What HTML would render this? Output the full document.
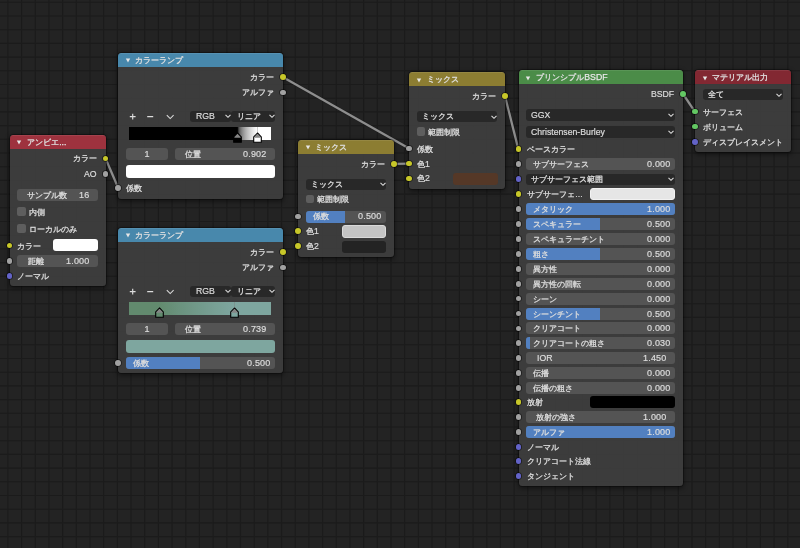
<!DOCTYPE html><html lang="ja"><head><meta charset="utf-8"><style>
*{margin:0;padding:0;box-sizing:border-box}
html,body{width:800px;height:548px;overflow:hidden;background:#232323}
body{position:relative;font-family:"Liberation Sans",sans-serif}
.bg{position:absolute;left:0;top:0}
.n{position:absolute;background:rgba(61,61,61,0.97);border-radius:3.5px;box-shadow:0 0 0 1px rgba(0,0,0,0.3),0 1.5px 4px 1px rgba(0,0,0,0.4);overflow:hidden}
.h{position:absolute;left:0;top:0;right:0;height:13.8px;box-shadow:inset 0 1px rgba(255,255,255,0.08)}
.t{position:absolute;will-change:transform;white-space:nowrap;color:#dcdcdc;font-size:8.7px;line-height:12px;height:12px;-webkit-text-stroke:0.2px #dcdcdc}
.j{font-size:8.3px;letter-spacing:0.05px;-webkit-text-stroke:0.3px #dcdcdc}
.tt{color:#e6e6e6;-webkit-text-stroke:0.25px #e6e6e6}
.s{position:absolute;width:5.8px;height:5.8px;border-radius:50%;box-shadow:0 0 0 0.8px rgba(0,0,0,0.55)}
.f{position:absolute;background:#545454;border-radius:3px}
.d{position:absolute;background:#282828;border-radius:3px}
.fill{position:absolute;background:#5280c0}
.sw{position:absolute;border-radius:3px}
.cb{position:absolute;width:8.4px;height:8.4px;background:#5e5e5e;border-radius:2px}
.ic,.ramp{position:absolute}
</style></head><body><svg class="bg" width="800" height="548" viewBox="0 0 800 548">
<rect width="800" height="548" fill="#232323"/>
<path d="M-5.78 0V548 M7.90 0V548 M21.58 0V548 M35.26 0V548 M48.95 0V548 M62.63 0V548 M76.31 0V548 M89.99 0V548 M103.67 0V548 M117.36 0V548 M131.04 0V548 M144.72 0V548 M158.40 0V548 M172.08 0V548 M185.77 0V548 M199.45 0V548 M213.13 0V548 M226.81 0V548 M240.49 0V548 M254.18 0V548 M267.86 0V548 M281.54 0V548 M295.22 0V548 M308.90 0V548 M322.59 0V548 M336.27 0V548 M349.95 0V548 M363.63 0V548 M377.31 0V548 M391.00 0V548 M404.68 0V548 M418.36 0V548 M432.04 0V548 M445.72 0V548 M459.41 0V548 M473.09 0V548 M486.77 0V548 M500.45 0V548 M514.13 0V548 M527.82 0V548 M541.50 0V548 M555.18 0V548 M568.86 0V548 M582.54 0V548 M596.23 0V548 M609.91 0V548 M623.59 0V548 M637.27 0V548 M650.95 0V548 M664.64 0V548 M678.32 0V548 M692.00 0V548 M705.68 0V548 M719.36 0V548 M733.05 0V548 M746.73 0V548 M760.41 0V548 M774.09 0V548 M787.77 0V548 M0 2.30H800 M0 16.00H800 M0 29.70H800 M0 43.40H800 M0 57.10H800 M0 70.80H800 M0 84.50H800 M0 98.20H800 M0 111.90H800 M0 125.60H800 M0 139.30H800 M0 153.00H800 M0 166.70H800 M0 180.40H800 M0 194.10H800 M0 207.80H800 M0 221.50H800 M0 235.20H800 M0 248.90H800 M0 262.60H800 M0 276.30H800 M0 290.00H800 M0 303.70H800 M0 317.40H800 M0 331.10H800 M0 344.80H800 M0 358.50H800 M0 372.20H800 M0 385.90H800 M0 399.60H800 M0 413.30H800 M0 427.00H800 M0 440.70H800 M0 454.40H800 M0 468.10H800 M0 481.80H800 M0 495.50H800 M0 509.20H800 M0 522.90H800 M0 536.60H800" stroke="#1b1b1b" stroke-width="1.1" fill="none"/>
<line x1="105.5" y1="158.5" x2="118.4" y2="188.2" stroke="#111" stroke-width="3.4" stroke-opacity="0.2"/>
<line x1="283" y1="77.3" x2="409.2" y2="148.6" stroke="#111" stroke-width="3.4" stroke-opacity="0.2"/>
<line x1="393.8" y1="163.9" x2="409.2" y2="163.6" stroke="#111" stroke-width="3.4" stroke-opacity="0.2"/>
<line x1="505" y1="96.3" x2="518.3" y2="148.9" stroke="#111" stroke-width="3.4" stroke-opacity="0.2"/>
<line x1="683" y1="94" x2="694.9" y2="111.6" stroke="#111" stroke-width="3.4" stroke-opacity="0.2"/>
<line x1="105.5" y1="158.5" x2="118.4" y2="188.2" stroke="#8e8e8e" stroke-width="2.3"/>
<line x1="283" y1="77.3" x2="409.2" y2="148.6" stroke="#8e8e8e" stroke-width="2.3"/>
<line x1="393.8" y1="163.9" x2="409.2" y2="163.6" stroke="#8e8e8e" stroke-width="2.3"/>
<line x1="505" y1="96.3" x2="518.3" y2="148.9" stroke="#8e8e8e" stroke-width="2.3"/>
<line x1="683" y1="94" x2="694.9" y2="111.6" stroke="#8e8e8e" stroke-width="2.3"/>
</svg>
<div class="n" style="left:9.5px;top:135px;width:96px;height:151px"><div class="h" style="background:#9e323e"></div></div>
<svg class="ic" style="left:16.1px;top:140.4px" width="6" height="5" viewBox="0 0 6 5"><path d="M0.8 0.6H5.2L3 4.4Z" fill="#e6e6e6"/></svg>
<div class="t tt" style="top:135.9px;left:26.8px;"><span class="j">アンビエ</span>...</div>
<div class="t " style="top:152.4px;right:703px;"><span class="j">カラー</span></div>
<div class="s" style="left:102.6px;top:155.6px;background:#c7c729"></div>
<div class="t " style="top:167.8px;right:703px;">AO</div>
<div class="s" style="left:102.6px;top:170.9px;background:#a1a1a1"></div>
<div class="f" style="left:17.25px;top:188.5px;width:80.55px;height:12px"></div>
<div class="t " style="top:188.5px;left:27.2px;"><span class="j">サンプル数</span></div>
<div class="t " style="top:188.5px;right:710.7px;font-size:9px;letter-spacing:0.2px;">16</div>
<div class="cb" style="left:17.2px;top:207.4px"></div>
<div class="t " style="top:205.5px;left:29.2px;"><span class="j">内側</span></div>
<div class="cb" style="left:17.2px;top:224.3px"></div>
<div class="t " style="top:222.5px;left:29.2px;"><span class="j">ローカルのみ</span></div>
<div class="s" style="left:6.6px;top:242.7px;background:#c7c729"></div>
<div class="t " style="top:239.6px;left:17.2px;"><span class="j">カラー</span></div>
<div class="sw" style="left:53.4px;top:239.4px;width:44.6px;height:12px;background:#ffffff"></div>
<div class="s" style="left:6.6px;top:258.1px;background:#a1a1a1"></div>
<div class="f" style="left:17.2px;top:255px;width:80.8px;height:11.8px"></div>
<div class="t " style="top:255px;left:27.7px;"><span class="j">距離</span></div>
<div class="t " style="top:255px;right:710.5px;font-size:9px;letter-spacing:0.2px;">1.000</div>
<div class="s" style="left:6.6px;top:273.1px;background:#6363c7"></div>
<div class="t " style="top:270px;left:17.2px;"><span class="j">ノーマル</span></div>
<div class="n" style="left:118px;top:53px;width:165px;height:145.8px"><div class="h" style="background:#4888ac"></div></div>
<svg class="ic" style="left:124.6px;top:58.4px" width="6" height="5" viewBox="0 0 6 5"><path d="M0.8 0.6H5.2L3 4.4Z" fill="#e6e6e6"/></svg>
<div class="t tt" style="top:53.9px;left:135.3px;"><span class="j">カラーランプ</span></div>
<div class="t " style="top:71.3px;right:526px;"><span class="j">カラー</span></div>
<div class="s" style="left:280.1px;top:74.4px;background:#c7c729"></div>
<div class="t " style="top:86.4px;right:526px;"><span class="j">アルファ</span></div>
<div class="s" style="left:280.1px;top:89.5px;background:#a1a1a1"></div>
<svg class="ic" style="left:129px;top:112.5px" width="48" height="7" viewBox="0 0 48 7"><path d="M0.8 3.6H6.6M3.7 0.8V6.4M18.2 3.6H24.2" stroke="#dcdcdc" stroke-width="1.15" fill="none"/><path d="M37.8 2.2L41.2 5.6L44.6 2.2" stroke="#dcdcdc" stroke-width="1.05" fill="none"/></svg>
<div class="d" style="left:189.8px;top:110.6px;width:41px;height:11.3px"></div>
<div class="t " style="top:110.2px;left:195.5px;">RGB</div>
<svg class="ic" style="left:224.5px;top:114.3px" width="6" height="5" viewBox="0 0 6 5"><path d="M0.5 0.8 L3 3.3 L5.5 0.8" fill="none" stroke="#dcdcdc" stroke-width="1.1"/></svg>
<div class="d" style="left:231.4px;top:110.6px;width:43.4px;height:11.3px"></div>
<div class="t " style="top:110.2px;left:236.7px;"><span class="j">リニア</span></div>
<svg class="ic" style="left:268.5px;top:114.3px" width="6" height="5" viewBox="0 0 6 5"><path d="M0.5 0.8 L3 3.3 L5.5 0.8" fill="none" stroke="#dcdcdc" stroke-width="1.1"/></svg>
<div class="ramp" style="left:128.8px;top:126.8px;width:142.4px;height:13.2px;background:linear-gradient(90deg,#000 0%,#000 76.3%,rgb(82,82,82) 77.46%,rgb(113,113,113) 78.62%,rgb(137,137,137) 79.77%,rgb(156,156,156) 80.93%,rgb(173,173,173) 82.09%,rgb(188,188,188) 83.25%,rgb(201,201,201) 84.41%,rgb(213,213,213) 85.57%,rgb(225,225,225) 86.73%,rgb(235,235,235) 87.88%,rgb(245,245,245) 89.04%,rgb(255,255,255) 90.20%,#fff 100%)"></div>
<svg class="ic" style="left:233.3px;top:127px" width="9" height="16" viewBox="0 0 9 16"><path d="M4.5 6 L8.3 10 V15.3 H0.7 V10 Z" fill="#000" stroke="#000" stroke-width="1.1"/><path d="M4.5 6.7 L7.6 10 V10.8 H1.4 V10 Z" fill="#858585"/></svg>
<svg class="ic" style="left:252.9px;top:127px" width="9" height="16" viewBox="0 0 9 16"><path d="M4.5 6 L8.3 10 V15.3 H0.7 V10 Z" fill="#fff" stroke="#000" stroke-width="1.1"/><path d="M4.5 6.7 L7.6 10 V10.8 H1.4 V10 Z" fill="#858585"/><path d="M4.5 0.5V5.5" stroke="#777" stroke-width="0.7" stroke-dasharray="1 1"/></svg>
<div class="f" style="left:126px;top:148.4px;width:41.7px;height:11.7px"></div>
<div class="t " style="top:148.3px;left:46.85px;width:200px;text-align:center;font-size:9px;letter-spacing:0.2px;">1</div>
<div class="f" style="left:175.1px;top:148.4px;width:99.7px;height:11.7px"></div>
<div class="t " style="top:148.3px;left:184.7px;"><span class="j">位置</span></div>
<div class="t " style="top:148.3px;right:533.1px;font-size:9px;letter-spacing:0.2px;">0.902</div>
<div class="sw" style="left:126px;top:165.4px;width:148.8px;height:12.4px;background:#ffffff"></div>
<div class="s" style="left:115.1px;top:185.3px;background:#a1a1a1"></div>
<div class="t " style="top:182.2px;left:126.4px;"><span class="j">係数</span></div>
<div class="n" style="left:118px;top:228px;width:165px;height:145px"><div class="h" style="background:#4888ac"></div></div>
<svg class="ic" style="left:124.6px;top:233.4px" width="6" height="5" viewBox="0 0 6 5"><path d="M0.8 0.6H5.2L3 4.4Z" fill="#e6e6e6"/></svg>
<div class="t tt" style="top:228.9px;left:135.3px;"><span class="j">カラーランプ</span></div>
<div class="t " style="top:246.3px;right:526px;"><span class="j">カラー</span></div>
<div class="s" style="left:280.1px;top:249.4px;background:#c7c729"></div>
<div class="t " style="top:261.4px;right:526px;"><span class="j">アルファ</span></div>
<div class="s" style="left:280.1px;top:264.5px;background:#a1a1a1"></div>
<svg class="ic" style="left:129px;top:287.5px" width="48" height="7" viewBox="0 0 48 7"><path d="M0.8 3.6H6.6M3.7 0.8V6.4M18.2 3.6H24.2" stroke="#dcdcdc" stroke-width="1.15" fill="none"/><path d="M37.8 2.2L41.2 5.6L44.6 2.2" stroke="#dcdcdc" stroke-width="1.05" fill="none"/></svg>
<div class="d" style="left:189.8px;top:285.6px;width:41px;height:11.3px"></div>
<div class="t " style="top:285.2px;left:195.5px;">RGB</div>
<svg class="ic" style="left:224.5px;top:289.3px" width="6" height="5" viewBox="0 0 6 5"><path d="M0.5 0.8 L3 3.3 L5.5 0.8" fill="none" stroke="#dcdcdc" stroke-width="1.1"/></svg>
<div class="d" style="left:231.4px;top:285.6px;width:43.4px;height:11.3px"></div>
<div class="t " style="top:285.2px;left:236.7px;"><span class="j">リニア</span></div>
<svg class="ic" style="left:268.5px;top:289.3px" width="6" height="5" viewBox="0 0 6 5"><path d="M0.5 0.8 L3 3.3 L5.5 0.8" fill="none" stroke="#dcdcdc" stroke-width="1.1"/></svg>
<div class="ramp" style="left:128.8px;top:301.8px;width:142.4px;height:13.2px;background:linear-gradient(90deg,rgb(98,138,110) 0%,rgb(98,138,110) 21.5%,rgb(101,141,115) 25.87%,rgb(103,143,120) 30.23%,rgb(106,146,125) 34.60%,rgb(108,148,129) 38.97%,rgb(111,150,133) 43.33%,rgb(113,153,137) 47.70%,rgb(115,155,141) 52.07%,rgb(118,157,145) 56.43%,rgb(120,160,149) 60.80%,rgb(122,162,152) 65.17%,rgb(124,164,156) 69.53%,rgb(126,166,159) 73.90%,rgb(126,166,159) 100%)"></div>
<svg class="ic" style="left:155.2px;top:302px" width="9" height="16" viewBox="0 0 9 16"><path d="M4.5 6 L8.3 10 V15.3 H0.7 V10 Z" fill="#628a6e" stroke="#000" stroke-width="1.1"/><path d="M4.5 6.7 L7.6 10 V10.8 H1.4 V10 Z" fill="#858585"/></svg>
<svg class="ic" style="left:229.7px;top:302px" width="9" height="16" viewBox="0 0 9 16"><path d="M4.5 6 L8.3 10 V15.3 H0.7 V10 Z" fill="#7ea69f" stroke="#000" stroke-width="1.1"/><path d="M4.5 6.7 L7.6 10 V10.8 H1.4 V10 Z" fill="#858585"/><path d="M4.5 0.5V5.5" stroke="#777" stroke-width="0.7" stroke-dasharray="1 1"/></svg>
<div class="f" style="left:126px;top:323.4px;width:41.7px;height:11.7px"></div>
<div class="t " style="top:323.3px;left:46.85px;width:200px;text-align:center;font-size:9px;letter-spacing:0.2px;">1</div>
<div class="f" style="left:175.1px;top:323.4px;width:99.7px;height:11.7px"></div>
<div class="t " style="top:323.3px;left:184.7px;"><span class="j">位置</span></div>
<div class="t " style="top:323.3px;right:533.1px;font-size:9px;letter-spacing:0.2px;">0.739</div>
<div class="sw" style="left:126px;top:340.4px;width:148.8px;height:12.4px;background:#7ea69f"></div>
<div class="s" style="left:115.1px;top:360.3px;background:#a1a1a1"></div>
<div class="f" style="left:126px;top:357.3px;width:148.8px;height:11.7px"></div>
<div class="fill" style="left:126px;top:357.3px;width:73.66px;height:11.7px;border-radius:3px 0 0 3px"></div>
<div class="t " style="top:357.2px;left:133.1px;"><span class="j">係数</span></div>
<div class="t " style="top:357.2px;right:529.1px;font-size:9px;letter-spacing:0.2px;">0.500</div>
<div class="n" style="left:298px;top:140px;width:95.8px;height:116.7px"><div class="h" style="background:#8c7d32"></div></div>
<svg class="ic" style="left:304.6px;top:145.4px" width="6" height="5" viewBox="0 0 6 5"><path d="M0.8 0.6H5.2L3 4.4Z" fill="#e6e6e6"/></svg>
<div class="t tt" style="top:140.9px;left:315.3px;"><span class="j">ミックス</span></div>
<div class="t " style="top:157.7px;right:414.8px;"><span class="j">カラー</span></div>
<div class="s" style="left:390.9px;top:160.8px;background:#c7c729"></div>
<div class="d" style="left:305.8px;top:178.6px;width:80.2px;height:11.3px"></div>
<div class="t " style="top:178.2px;left:310.9px;"><span class="j">ミックス</span></div>
<svg class="ic" style="left:379.5px;top:182.3px" width="6" height="5" viewBox="0 0 6 5"><path d="M0.5 0.8 L3 3.3 L5.5 0.8" fill="none" stroke="#dcdcdc" stroke-width="1.1"/></svg>
<div class="cb" style="left:305.8px;top:195.1px"></div>
<div class="t " style="top:193.4px;left:316.7px;"><span class="j">範囲制限</span></div>
<div class="s" style="left:295.1px;top:213.5px;background:#a1a1a1"></div>
<div class="s" style="left:295.1px;top:228.4px;background:#c7c729"></div>
<div class="s" style="left:295.1px;top:243.3px;background:#c7c729"></div>
<div class="f" style="left:305.8px;top:210.7px;width:80.2px;height:11.9px"></div>
<div class="fill" style="left:305.8px;top:210.7px;width:39.3px;height:11.9px;border-radius:3px 0 0 3px"></div>
<div class="t " style="top:210.4px;left:312.5px;"><span class="j">係数</span></div>
<div class="t " style="top:210.4px;right:418.2px;font-size:9px;letter-spacing:0.2px;">0.500</div>
<div class="t " style="top:225.3px;left:305.5px;"><span class="j">色</span>1</div>
<div class="sw" style="left:341.8px;top:225.2px;width:44.4px;height:12.4px;background:#c4c4c4;border:1px solid #dadada"></div>
<div class="t " style="top:240.2px;left:305.5px;"><span class="j">色</span>2</div>
<div class="sw" style="left:341.8px;top:240.5px;width:44.4px;height:12px;background:#232323"></div>
<div class="n" style="left:409.2px;top:72.2px;width:95.8px;height:116.7px"><div class="h" style="background:#8c7d32"></div></div>
<svg class="ic" style="left:415.8px;top:77.6px" width="6" height="5" viewBox="0 0 6 5"><path d="M0.8 0.6H5.2L3 4.4Z" fill="#e6e6e6"/></svg>
<div class="t tt" style="top:73.1px;left:426.5px;"><span class="j">ミックス</span></div>
<div class="t " style="top:89.9px;right:303.6px;"><span class="j">カラー</span></div>
<div class="s" style="left:502.1px;top:93px;background:#c7c729"></div>
<div class="d" style="left:417px;top:110.8px;width:80.2px;height:11.3px"></div>
<div class="t " style="top:110.4px;left:422.1px;"><span class="j">ミックス</span></div>
<svg class="ic" style="left:490.7px;top:114.5px" width="6" height="5" viewBox="0 0 6 5"><path d="M0.5 0.8 L3 3.3 L5.5 0.8" fill="none" stroke="#dcdcdc" stroke-width="1.1"/></svg>
<div class="cb" style="left:417px;top:127.3px"></div>
<div class="t " style="top:125.6px;left:427.9px;"><span class="j">範囲制限</span></div>
<div class="s" style="left:406.3px;top:145.7px;background:#a1a1a1"></div>
<div class="s" style="left:406.3px;top:160.6px;background:#c7c729"></div>
<div class="s" style="left:406.3px;top:175.5px;background:#c7c729"></div>
<div class="t " style="top:142.6px;left:416.7px;"><span class="j">係数</span></div>
<div class="t " style="top:157.5px;left:416.7px;"><span class="j">色</span>1</div>
<div class="t " style="top:172.4px;left:416.7px;"><span class="j">色</span>2</div>
<div class="sw" style="left:452.6px;top:173px;width:45.3px;height:12.3px;background:#553827"></div>
<div class="n" style="left:518.6px;top:70.4px;width:164.2px;height:415.6px"><div class="h" style="background:#4b8c48"></div></div>
<svg class="ic" style="left:525.2px;top:75.8px" width="6" height="5" viewBox="0 0 6 5"><path d="M0.8 0.6H5.2L3 4.4Z" fill="#e6e6e6"/></svg>
<div class="t tt" style="top:71.3px;left:535.9px;"><span class="j">プリンシプル</span>BSDF</div>
<div class="t " style="top:88px;right:126px;">BSDF</div>
<div class="s" style="left:679.9px;top:91.1px;background:#63c763"></div>
<div class="d" style="left:526px;top:109.3px;width:148.8px;height:11.5px"></div>
<div class="t " style="top:109px;left:530.8px;">GGX</div>
<svg class="ic" style="left:668.2px;top:113.3px" width="6" height="5" viewBox="0 0 6 5"><path d="M0.5 0.8 L3 3.3 L5.5 0.8" fill="none" stroke="#dcdcdc" stroke-width="1.1"/></svg>
<div class="d" style="left:526px;top:126.4px;width:148.8px;height:11.5px"></div>
<div class="t " style="top:126.2px;left:530.8px;">Christensen-Burley</div>
<svg class="ic" style="left:668.2px;top:130.4px" width="6" height="5" viewBox="0 0 6 5"><path d="M0.5 0.8 L3 3.3 L5.5 0.8" fill="none" stroke="#dcdcdc" stroke-width="1.1"/></svg>
<div class="s" style="left:515.7px;top:146px;background:#c7c729"></div>
<div class="t " style="top:142.9px;left:526.7px;"><span class="j">ベースカラー</span></div>
<div class="s" style="left:515.7px;top:161.1px;background:#a1a1a1"></div>
<div class="f" style="left:526px;top:157.8px;width:148.8px;height:12px"></div>
<div class="t " style="top:158px;left:533.2px;"><span class="j">サブサーフェス</span></div>
<div class="t " style="top:158px;right:129.2px;font-size:9px;letter-spacing:0.2px;">0.000</div>
<div class="s" style="left:515.7px;top:176.1px;background:#6363c7"></div>
<div class="d" style="left:526px;top:173.6px;width:148.8px;height:11.5px"></div>
<div class="t " style="top:173.2px;left:531.1px;"><span class="j">サブサーフェス範囲</span></div>
<svg class="ic" style="left:668.2px;top:177.4px" width="6" height="5" viewBox="0 0 6 5"><path d="M0.5 0.8 L3 3.3 L5.5 0.8" fill="none" stroke="#dcdcdc" stroke-width="1.1"/></svg>
<div class="s" style="left:515.7px;top:190.9px;background:#c7c729"></div>
<div class="t " style="top:187.8px;left:526.7px;"><span class="j">サブサーフェ</span>...</div>
<div class="sw" style="left:589.6px;top:188.3px;width:85.4px;height:12.2px;background:#e6e6e6;border:1px solid #f2f2f2"></div>
<div class="s" style="left:515.7px;top:206.3px;background:#a1a1a1"></div>
<div class="f" style="left:526px;top:203.2px;width:148.8px;height:12px"></div>
<div class="fill" style="left:526px;top:203.2px;width:148.8px;height:12px;border-radius:3px"></div>
<div class="t " style="top:203.2px;left:533.2px;"><span class="j">メタリック</span></div>
<div class="t " style="top:203.2px;right:129.2px;font-size:9px;letter-spacing:0.2px;">1.000</div>
<div class="s" style="left:515.7px;top:221.2px;background:#a1a1a1"></div>
<div class="f" style="left:526px;top:218.1px;width:148.8px;height:12px"></div>
<div class="fill" style="left:526px;top:218.1px;width:74.4px;height:12px;border-radius:3px 0 0 3px"></div>
<div class="t " style="top:218.1px;left:533.2px;"><span class="j">スペキュラー</span></div>
<div class="t " style="top:218.1px;right:129.2px;font-size:9px;letter-spacing:0.2px;">0.500</div>
<div class="s" style="left:515.7px;top:236.1px;background:#a1a1a1"></div>
<div class="f" style="left:526px;top:233px;width:148.8px;height:12px"></div>
<div class="t " style="top:233px;left:533.2px;"><span class="j">スペキュラーチント</span></div>
<div class="t " style="top:233px;right:129.2px;font-size:9px;letter-spacing:0.2px;">0.000</div>
<div class="s" style="left:515.7px;top:251px;background:#a1a1a1"></div>
<div class="f" style="left:526px;top:247.9px;width:148.8px;height:12px"></div>
<div class="fill" style="left:526px;top:247.9px;width:74.4px;height:12px;border-radius:3px 0 0 3px"></div>
<div class="t " style="top:247.9px;left:533.2px;"><span class="j">粗さ</span></div>
<div class="t " style="top:247.9px;right:129.2px;font-size:9px;letter-spacing:0.2px;">0.500</div>
<div class="s" style="left:515.7px;top:265.9px;background:#a1a1a1"></div>
<div class="f" style="left:526px;top:262.8px;width:148.8px;height:12px"></div>
<div class="t " style="top:262.8px;left:533.2px;"><span class="j">異方性</span></div>
<div class="t " style="top:262.8px;right:129.2px;font-size:9px;letter-spacing:0.2px;">0.000</div>
<div class="s" style="left:515.7px;top:280.8px;background:#a1a1a1"></div>
<div class="f" style="left:526px;top:277.7px;width:148.8px;height:12px"></div>
<div class="t " style="top:277.7px;left:533.2px;"><span class="j">異方性の回転</span></div>
<div class="t " style="top:277.7px;right:129.2px;font-size:9px;letter-spacing:0.2px;">0.000</div>
<div class="s" style="left:515.7px;top:295.7px;background:#a1a1a1"></div>
<div class="f" style="left:526px;top:292.6px;width:148.8px;height:12px"></div>
<div class="t " style="top:292.6px;left:533.2px;"><span class="j">シーン</span></div>
<div class="t " style="top:292.6px;right:129.2px;font-size:9px;letter-spacing:0.2px;">0.000</div>
<div class="s" style="left:515.7px;top:310.6px;background:#a1a1a1"></div>
<div class="f" style="left:526px;top:307.5px;width:148.8px;height:12px"></div>
<div class="fill" style="left:526px;top:307.5px;width:74.4px;height:12px;border-radius:3px 0 0 3px"></div>
<div class="t " style="top:307.5px;left:533.2px;"><span class="j">シーンチント</span></div>
<div class="t " style="top:307.5px;right:129.2px;font-size:9px;letter-spacing:0.2px;">0.500</div>
<div class="s" style="left:515.7px;top:325.5px;background:#a1a1a1"></div>
<div class="f" style="left:526px;top:322.4px;width:148.8px;height:12px"></div>
<div class="t " style="top:322.4px;left:533.2px;"><span class="j">クリアコート</span></div>
<div class="t " style="top:322.4px;right:129.2px;font-size:9px;letter-spacing:0.2px;">0.000</div>
<div class="s" style="left:515.7px;top:340.4px;background:#a1a1a1"></div>
<div class="f" style="left:526px;top:337.3px;width:148.8px;height:12px"></div>
<div class="fill" style="left:526px;top:337.3px;width:4.46px;height:12px;border-radius:3px 0 0 3px"></div>
<div class="t " style="top:337.3px;left:533.2px;"><span class="j">クリアコートの粗さ</span></div>
<div class="t " style="top:337.3px;right:129.2px;font-size:9px;letter-spacing:0.2px;">0.030</div>
<div class="s" style="left:515.7px;top:355.3px;background:#a1a1a1"></div>
<div class="f" style="left:526px;top:352.2px;width:148.8px;height:12px"></div>
<div class="t " style="top:352.2px;left:537px;">IOR</div>
<div class="t " style="top:352.2px;right:133.2px;font-size:9px;letter-spacing:0.2px;">1.450</div>
<div class="s" style="left:515.7px;top:370.2px;background:#a1a1a1"></div>
<div class="f" style="left:526px;top:367.1px;width:148.8px;height:12px"></div>
<div class="t " style="top:367.1px;left:533.2px;"><span class="j">伝播</span></div>
<div class="t " style="top:367.1px;right:129.2px;font-size:9px;letter-spacing:0.2px;">0.000</div>
<div class="s" style="left:515.7px;top:385.1px;background:#a1a1a1"></div>
<div class="f" style="left:526px;top:382px;width:148.8px;height:12px"></div>
<div class="t " style="top:382px;left:533.2px;"><span class="j">伝播の粗さ</span></div>
<div class="t " style="top:382px;right:129.2px;font-size:9px;letter-spacing:0.2px;">0.000</div>
<div class="s" style="left:515.7px;top:399.4px;background:#c7c729"></div>
<div class="t " style="top:396.3px;left:526.7px;"><span class="j">放射</span></div>
<div class="sw" style="left:589.5px;top:396.2px;width:85.5px;height:12px;background:#000000"></div>
<div class="s" style="left:515.7px;top:414px;background:#a1a1a1"></div>
<div class="f" style="left:526px;top:411px;width:148.8px;height:11.8px"></div>
<div class="t " style="top:410.9px;left:536.2px;"><span class="j">放射の強さ</span></div>
<div class="t " style="top:410.9px;right:133.2px;font-size:9px;letter-spacing:0.2px;">1.000</div>
<div class="s" style="left:515.7px;top:428.9px;background:#a1a1a1"></div>
<div class="f" style="left:526px;top:425.9px;width:148.8px;height:11.8px"></div>
<div class="fill" style="left:526px;top:425.9px;width:148.8px;height:11.8px;border-radius:3px"></div>
<div class="t " style="top:425.8px;left:533.2px;"><span class="j">アルファ</span></div>
<div class="t " style="top:425.8px;right:129.2px;font-size:9px;letter-spacing:0.2px;">1.000</div>
<div class="s" style="left:515.7px;top:443.8px;background:#6363c7"></div>
<div class="t " style="top:440.7px;left:526.7px;"><span class="j">ノーマル</span></div>
<div class="s" style="left:515.7px;top:458.4px;background:#6363c7"></div>
<div class="t " style="top:455.3px;left:526.7px;"><span class="j">クリアコート法線</span></div>
<div class="s" style="left:515.7px;top:473px;background:#6363c7"></div>
<div class="t " style="top:469.9px;left:526.7px;"><span class="j">タンジェント</span></div>
<div class="n" style="left:694.9px;top:70.3px;width:95.9px;height:81.7px"><div class="h" style="background:#822832"></div></div>
<svg class="ic" style="left:701.5px;top:75.7px" width="6" height="5" viewBox="0 0 6 5"><path d="M0.8 0.6H5.2L3 4.4Z" fill="#e6e6e6"/></svg>
<div class="t tt" style="top:71.2px;left:712.2px;"><span class="j">マテリアル出力</span></div>
<div class="d" style="left:703px;top:88.6px;width:79.8px;height:11.5px"></div>
<div class="t " style="top:88.4px;left:708.2px;"><span class="j">全て</span></div>
<svg class="ic" style="left:776.2px;top:92.6px" width="6" height="5" viewBox="0 0 6 5"><path d="M0.5 0.8 L3 3.3 L5.5 0.8" fill="none" stroke="#dcdcdc" stroke-width="1.1"/></svg>
<div class="s" style="left:692px;top:108.7px;background:#63c763"></div>
<div class="t " style="top:105.6px;left:702.7px;"><span class="j">サーフェス</span></div>
<div class="s" style="left:692px;top:123.6px;background:#63c763"></div>
<div class="t " style="top:120.5px;left:702.7px;"><span class="j">ボリューム</span></div>
<div class="s" style="left:692px;top:138.8px;background:#6363c7"></div>
<div class="t " style="top:135.7px;left:702.7px;"><span class="j">ディスプレイスメント</span></div></body></html>
